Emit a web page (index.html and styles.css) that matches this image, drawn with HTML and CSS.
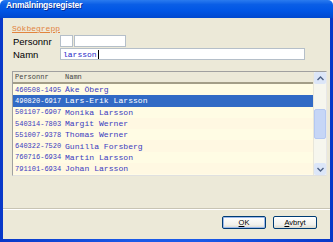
FILE: index.html
```html
<!DOCTYPE html>
<html>
<head>
<meta charset="utf-8">
<link rel="stylesheet" href="styles.css">
</head>
<body>
<div class="window">
  <div class="titlebar">Anmälningsregister</div>
  <div class="frame">
    <div class="body">
      <div class="search">
        <div class="legend">Sökbegrepp</div>
        <div class="field">
          <span class="label">Personnr</span>
          <span class="input w1"></span>
          <span class="input w2"></span>
        </div>
        <div class="field">
          <span class="label">Namn</span>
          <span class="input w3"><span class="val">larsson</span><span class="caret"></span></span>
        </div>
      </div>
      <div class="list">
        <div class="listmain">
          <div class="row head"><span class="c1">Personnr</span><span>Namn</span></div>
          <div class="row"><span class="c1">460508-1495</span><span class="c2">Åke Öberg</span></div>
          <div class="row sel"><span class="c1">490820-6917</span><span class="c2">Lars-Erik Larsson</span></div>
          <div class="row"><span class="c1">501107-6907</span><span class="c2">Monika Larsson</span></div>
          <div class="row"><span class="c1">540314-7803</span><span class="c2">Margit Werner</span></div>
          <div class="row"><span class="c1">551007-9378</span><span class="c2">Thomas Werner</span></div>
          <div class="row"><span class="c1">640322-7520</span><span class="c2">Gunilla Forsberg</span></div>
          <div class="row"><span class="c1">760716-6934</span><span class="c2">Martin Larsson</span></div>
          <div class="row"><span class="c1">791101-6934</span><span class="c2">Johan Larsson</span></div>
        </div>
        <div class="scroll">
          <div class="sbtn"><svg width="7" height="5" viewBox="0 0 7 5"><path d="M0.5 4 L3.5 1 L6.5 4" fill="none" stroke="#4D6185" stroke-width="1.4"/></svg></div>
          <div class="track"><div class="thumb"></div></div>
          <div class="sbtn"><svg width="7" height="5" viewBox="0 0 7 5"><path d="M0.5 1 L3.5 4 L6.5 1" fill="none" stroke="#4D6185" stroke-width="1.4"/></svg></div>
        </div>
      </div>
      <div class="spacer"></div>
      <div class="sep"></div>
      <div class="buttons">
        <button class="btn def"><u>O</u>K</button>
        <button class="btn"><u>A</u>vbryt</button>
      </div>
    </div>
  </div>
</div>
</body>
</html>
```
FILE: styles.css
```css
html, body {
  margin: 0;
  padding: 0;
  background: #ffffff;
}
.window {
  width: 333px;
  height: 242px;
  display: flex;
  flex-direction: column;
  font-family: "Liberation Sans", "DejaVu Sans", sans-serif;
}
.titlebar {
  height: 18px;
  line-height: 18px;
  padding-left: 6px;
  color: #ffffff;
  font: bold 8.5px "Liberation Sans", sans-serif;
  letter-spacing: -0.2px;
  background: linear-gradient(#2A7BEF 0%, #0A5EE6 25%, #0055E5 60%, #0048CF 100%);
  border-radius: 5px 5px 0 0;
  text-shadow: 1px 1px 0 #0A2E9A;
}
.frame {
  flex: 1;
  display: flex;
  background: linear-gradient(90deg, #0838C8, #1A5AE8 40%, #1A5AE8 60%, #0838C8);
  padding: 0 3px 3px 3px;
}
.body {
  flex: 1;
  background: #ECE9D8;
  display: flex;
  flex-direction: column;
  padding: 0 3px 0 9px;
}
.search {
  padding-top: 6px;
}
.legend {
  font: 8px "Liberation Mono", monospace;
  color: #E2843E;
  text-decoration: underline;
  height: 10px;
  line-height: 10px;
}
.field {
  display: flex;
  align-items: center;
  height: 12px;
  margin-top: 1px;
  gap: 2px;
}
.label {
  width: 45px;
  font: 9.5px "Liberation Sans", sans-serif;
  color: #000;
  padding-left: 1px;
}
.input {
  display: flex;
  align-items: center;
  height: 10px;
  background: #fff;
  border: 1px solid #B5BFC9;
}
.w1 { width: 11px; }
.w2 { width: 50px; margin-left: -1px; }
.w3 { width: 243px; }
.val {
  font: 8px "Liberation Mono", monospace;
  color: #2828C8;
  padding-left: 2px;
}
.caret {
  width: 1px;
  height: 9px;
  background: #000;
  margin-left: 1px;
}
.list {
  margin-top: 11px;
  height: 105px;
  width: 315px;
  display: flex;
  border: 1px solid #A0A0A0;
  border-right-color: #E8E8E8;
  border-bottom-color: #E0E0E0;
  background: #FFFBE6;
  box-sizing: border-box;
}
.listmain {
  flex: 1;
  display: flex;
  flex-direction: column;
}
.row {
  height: 11.3px;
  display: flex;
  align-items: center;
  font: 7px "Liberation Mono", monospace;
  color: #3A3AC0;
  padding-left: 2px;
  background: #FFFCE4;
  white-space: nowrap;
}
.row:nth-child(odd) { background: #FFF8E2; }
.row .c1 { width: 50px; flex-shrink: 0; }
.row .c2 { font-size: 8.1px; }
.row.head {
  height: 10px;
  background: #ECE9D8;
  color: #444;
  border-bottom: 2px solid #A39E88;
}
.row.sel {
  background: #316AC5;
  color: #ffffff;
}
.scroll {
  width: 12px;
  display: flex;
  flex-direction: column;
  background: #F6F6EE;
  border-left: 1px solid #E8E6DA;
}
.sbtn {
  height: 12px;
  display: flex;
  align-items: center;
  justify-content: center;
  background: #DCE6F8;
  border-radius: 2px;
}
.track {
  flex: 1;
  padding-top: 25px;
}
.thumb {
  height: 28px;
  background: #C6D6F6;
  border: 1px solid #B4C8F2;
  border-radius: 2px;
}
.spacer { flex: 1; }
.sep {
  height: 0;
  border-top: 1px solid #C8C4B4;
  border-bottom: 1px solid #fff;
  margin-left: -9px;
  margin-right: -3px;
}
.buttons {
  display: flex;
  justify-content: flex-end;
  gap: 7px;
  padding: 6px 10px 10px 0;
}
.btn {
  width: 44px;
  height: 13px;
  padding: 0;
  font: 7.5px "Liberation Sans", sans-serif;
  color: #000;
  background: linear-gradient(#FFFFFF, #F2F1EC 70%, #DAD8CC);
  border: 1px solid #003C74;
  border-radius: 2px;
}
.btn.def {
  box-shadow: inset 0 0 0 1px #9DB9EB;
}
```
